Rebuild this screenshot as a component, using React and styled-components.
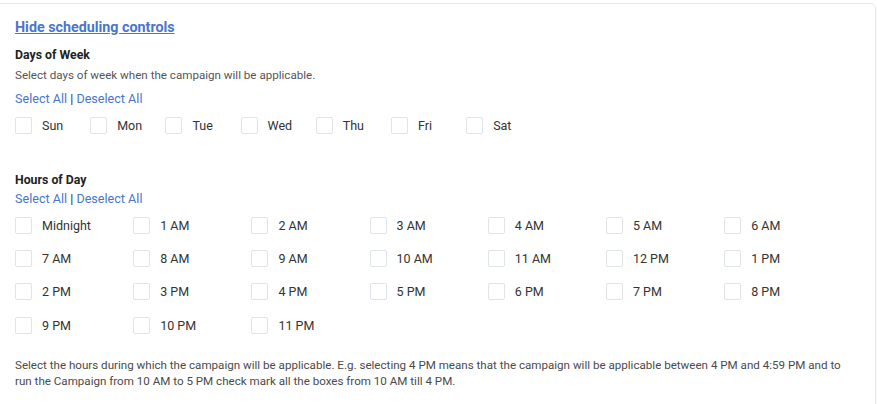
import React from 'react';
import styled, { createGlobalStyle } from 'styled-components';

const GlobalStyle = createGlobalStyle`
    html, body {
        margin: 0;
        padding: 0;
        background: #ffffff;
        font-family: Roboto, "Liberation Sans", Arial, sans-serif;
        color: #333333;
        overflow: hidden;
    }
`;

const Card = styled.div`
    margin: 3px 1px 0 -10px;
    padding: 13px 16px 20px 24px;
    background: #ffffff;
    border: 1px solid #e4e7ee;
    border-radius: 5px;
    min-height: 420px;
`;

const ToggleLink = styled.a`
    display: inline-block;
    font-size: 14.3px;
    line-height: 20px;
    font-weight: 700;
    color: #4a76cc;
    text-decoration: underline;
    cursor: pointer;
`;

const Section = styled.div`
    margin-top: ${(p) => p.$gap || 0}px;
`;

const Heading = styled.div`
    font-size: 12.3px;
    line-height: 16px;
    font-weight: 700;
    color: #222222;
`;

const Hint = styled.div`
    margin-top: 4px;
    font-size: 11.6px;
    line-height: 16px;
    color: #555555;
`;

const BulkActions = styled.div`
    margin-top: ${(p) => p.$gap || 8}px;
    font-size: 12.6px;
    line-height: 16px;
    color: #333;
    a {
        color: #4a76cc;
        text-decoration: none;
        cursor: pointer;
    }
`;

const OptionGrid = styled.div`
    margin-top: 10px;
    display: grid;
    grid-template-columns: repeat(${(p) => p.$cols}, ${(p) => p.$colWidth}px);
    row-gap: 17.4px;
`;

const Option = styled.label`
    display: flex;
    align-items: center;
    gap: 10px;
    height: 16px;
    font-size: 12.5px;
    color: #333333;
    cursor: pointer;
`;

const Box = styled.span`
    flex: none;
    width: 15px;
    height: 15px;
    border: 1px solid #dfe3ea;
    border-radius: 2px;
    background: #fff;
`;

const Note = styled.p`
    margin: 24px 0 0;
    font-size: 11.6px;
    line-height: 16px;
    color: #4a4a4a;
`;

const days = ['Sun', 'Mon', 'Tue', 'Wed', 'Thu', 'Fri', 'Sat'];

const hours = [
    'Midnight', '1 AM', '2 AM', '3 AM', '4 AM', '5 AM', '6 AM',
    '7 AM', '8 AM', '9 AM', '10 AM', '11 AM', '12 PM', '1 PM',
    '2 PM', '3 PM', '4 PM', '5 PM', '6 PM', '7 PM', '8 PM',
    '9 PM', '10 PM', '11 PM',
];

const Bulk = ({ gap }) => (
    <BulkActions $gap={gap}>
        <a>Select All</a> | <a>Deselect All</a>
    </BulkActions>
);

const App = () => {
    return (
        <>
            <GlobalStyle />
            <Card>
                <ToggleLink>Hide scheduling controls</ToggleLink>

                <Section $gap={10}>
                    <Heading>Days of Week</Heading>
                    <Hint>Select days of week when the campaign will be applicable.</Hint>
                    <Bulk gap={8} />
                    <OptionGrid $cols={7} $colWidth={75.2}>
                        {days.map((d) => (
                            <Option key={d}>
                                <Box />
                                {d}
                            </Option>
                        ))}
                    </OptionGrid>
                </Section>

                <Section $gap={39}>
                    <Heading>Hours of Day</Heading>
                    <Bulk gap={3} />
                    <OptionGrid $cols={7} $colWidth={118.2}>
                        {hours.map((h) => (
                            <Option key={h}>
                                <Box />
                                {h}
                            </Option>
                        ))}
                    </OptionGrid>
                </Section>

                <Note>
                    Select the hours during which the campaign will be applicable. E.g. selecting 4 PM means that the campaign will be applicable between 4 PM and 4:59 PM and to run the Campaign from 10 AM to 5 PM check mark all the boxes from 10 AM till 4 PM.
                </Note>
            </Card>
        </>
    );
};

export default App;
